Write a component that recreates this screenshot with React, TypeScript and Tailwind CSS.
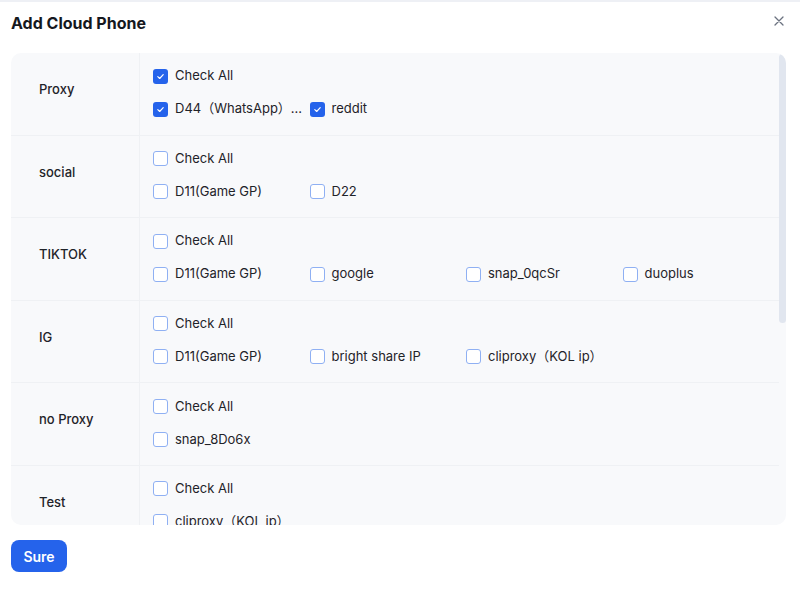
import React from "react";

type Item = { label: string; checked?: boolean };
type Group = { name: string; all?: boolean; items: Item[] };

const groups: Group[] = [
  { name: "Proxy", all: true, items: [{ label: "D44（WhatsApp）...", checked: true }, { label: "reddit", checked: true }] },
  { name: "social", items: [{ label: "D11(Game GP)" }, { label: "D22" }] },
  { name: "TIKTOK", items: [{ label: "D11(Game GP)" }, { label: "google" }, { label: "snap_0qcSr" }, { label: "duoplus" }] },
  { name: "IG", items: [{ label: "D11(Game GP)" }, { label: "bright share IP" }, { label: "cliproxy（KOL ip）" }] },
  { name: "no Proxy", items: [{ label: "snap_8Do6x" }] },
  { name: "Test", items: [{ label: "cliproxy（KOL ip）" }] },
  { name: "US", items: [{ label: "US-01" }, { label: "US-02" }] },
  { name: "EU", items: [{ label: "DE-01" }] },
  { name: "Asia", items: [{ label: "SG-01" }, { label: "JP-01" }] },
  { name: "Other", items: [{ label: "default" }] },
];

function Box({ checked }: { checked?: boolean }) {
  if (checked) {
    return (
      <span className="flex h-[15px] w-[15px] shrink-0 items-center justify-center rounded-[3px] bg-[#2563eb]">
        <svg width="9" height="9" viewBox="0 0 10 10" fill="none">
          <path d="M2 5.2L4.1 7.2L8 3" stroke="white" strokeWidth="1.3" strokeLinecap="round" strokeLinejoin="round" />
        </svg>
      </span>
    );
  }
  return <span className="h-[15px] w-[15px] shrink-0 rounded-[3px] border border-[#8fb0f3] bg-white" />;
}

function Check({ label, checked }: Item) {
  return (
    <label className="flex h-8 min-w-0 items-center gap-[7px] pr-[4px]">
      <Box checked={checked} />
      <span className="whitespace-nowrap text-[13px] text-[#1f2329]">{label}</span>
    </label>
  );
}

export default function App() {
  return (
    <div
      className="flex h-[592px] w-[800px] flex-col border-t-2 border-[#eef0f5] bg-white"
      style={{ fontFamily: "Inter, 'Noto Sans CJK SC', sans-serif" }}
    >
      <div className="flex items-center justify-between pl-[11px] pr-[16px] pt-[10px]">
        <h1 className="text-[16px] font-bold leading-[22px] text-[#15181e]">Add Cloud Phone</h1>
        <svg width="10" height="10" viewBox="0 0 10 10" className="-mt-[5px]" fill="none">
          <path d="M1 1L9 9M9 1L1 9" stroke="#6b7280" strokeWidth="1.3" strokeLinecap="round" />
        </svg>
      </div>
      <div className="relative ml-[11px] mr-[14px] mt-[19px] h-[472px] overflow-hidden rounded-[10px] bg-[#f8f9fb]">
        <div className="h-full overflow-y-auto pr-[7px] [scrollbar-width:none] [&::-webkit-scrollbar]:hidden">
          {groups.map((g) => (
            <div key={g.name} className="flex border-b border-[#eff1f4]">
              <div className="flex w-[129px] shrink-0 items-center border-r border-[#eff1f4] pb-2 pl-[28px] text-[13px] font-medium text-[#1f2329]">
                {g.name}
              </div>
              <div className="min-w-0 flex-1 pb-[9.6px] pl-[13px] pt-[7px]">
                <Check label="Check All" checked={g.all} />
                <div className="mt-[1px] grid grid-cols-4">
                  {g.items.map((it, i) => (
                    <Check key={i} label={it.label} checked={it.checked} />
                  ))}
                </div>
              </div>
            </div>
          ))}
        </div>
        <div className="absolute right-0 top-[1px] h-[269px] w-[7px] rounded-full bg-[#e1e6ef]" />
      </div>
      <div className="pl-[11px] pt-[15px]">
        <button className="h-8 w-[56px] rounded-lg bg-[#2563eb] text-[14px] font-semibold text-white">Sure</button>
      </div>
    </div>
  );
}
